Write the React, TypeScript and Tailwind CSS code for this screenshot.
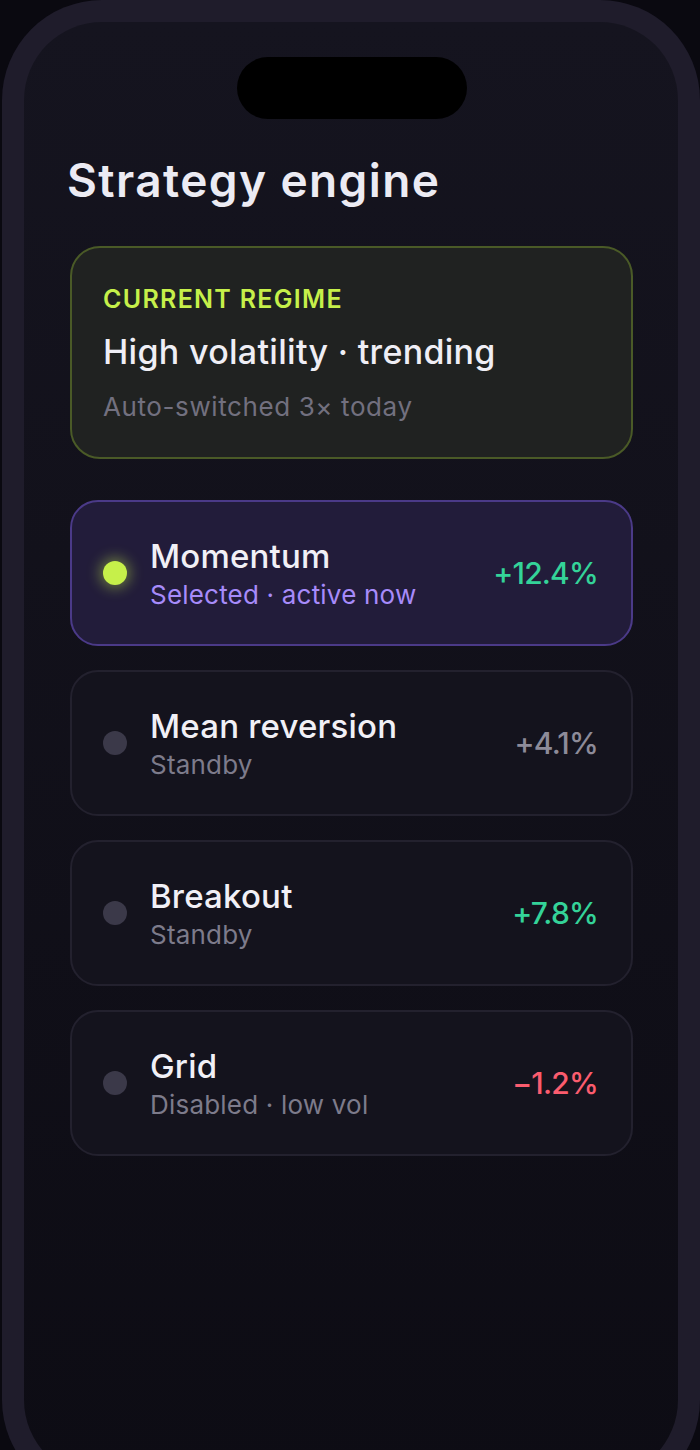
import React from "react";

type Strategy = {
  name: string;
  status: string;
  value: string;
  valueClass: string;
  active?: boolean;
};

const strategies: Strategy[] = [
  { name: "Momentum", status: "Selected · active now", value: "+12.4%", valueClass: "text-[#34d399]", active: true },
  { name: "Mean reversion", status: "Standby", value: "+4.1%", valueClass: "text-[#8d8b99]" },
  { name: "Breakout", status: "Standby", value: "+7.8%", valueClass: "text-[#34d399]" },
  { name: "Grid", status: "Disabled · low vol", value: "−1.2%", valueClass: "text-[#fb5c6e]" },
];

function StrategyRow({ s }: { s: Strategy }) {
  return (
    <div
      className={
        s.active
          ? "flex h-[146px] items-center rounded-[28px] border-2 border-[#4b3a88] bg-[#221c3a] pl-[31px] pr-[33px]"
          : "flex h-[146px] items-center rounded-[28px] border-2 border-[#23212e] bg-[#14131d] pl-[31px] pr-[33px]"
      }
    >
      <div
        className={
          s.active
            ? "h-[24px] w-[24px] shrink-0 rounded-full bg-[#c6f04a] shadow-[0_0_14px_3px_rgba(198,240,74,0.45)]"
            : "h-[24px] w-[24px] shrink-0 rounded-full bg-[#3b3949]"
        }
      />
      <div className="ml-[23px] flex min-w-0 flex-1 flex-col">
        <div className="text-[33px] font-medium leading-[40px] tracking-[0.2px] text-[#f1f0f6]">{s.name}</div>
        <div
          className={
            s.active
              ? "mt-[3px] text-[26px] leading-[32px] tracking-[0.2px] text-[#a78bfa]"
              : "mt-[3px] text-[26px] leading-[32px] tracking-[0.2px] text-[#7d7b8b]"
          }
        >
          {s.status}
        </div>
      </div>
      <div className={"text-[30px] font-medium tracking-[-0.8px] " + s.valueClass}>{s.value}</div>
    </div>
  );
}

export default function App() {
  return (
    <div
      className="relative h-[1450px] w-[700px] overflow-hidden bg-[#0a0910]"
      style={{ fontFamily: "Inter, 'Noto Sans', sans-serif" }}
    >
      {/* device frame */}
      <div className="absolute left-[2px] top-0 h-[1500px] w-[698px] rounded-[100px] bg-[#1f1c2b] p-[22px]">
        <div className="flex h-full w-full flex-col rounded-[78px] bg-gradient-to-b from-[#15141f] to-[#0d0c14] pl-[46px] pr-[45px]">
          {/* dynamic island */}
          <div className="mx-auto mt-[35px] h-[62px] w-[230px] shrink-0 rounded-full bg-black" />

          <h1 className="ml-[-3px] mt-[31px] text-[46px] font-semibold leading-[60px] tracking-[1.4px] text-[#ecebf3]">
            Strategy engine
          </h1>

          {/* regime card */}
          <div className="mt-[36px] flex h-[213px] flex-col rounded-[30px] border-2 border-[#4a5a27] bg-[#202221] px-[31px] pt-[36px]">
            <div className="text-[25px] font-semibold leading-[30px] tracking-[1.3px] text-[#c6f04a]">CURRENT REGIME</div>
            <div className="mt-[18px] text-[34px] font-medium leading-[40px] tracking-[0.3px] text-[#efeef5]">
              High volatility · trending
            </div>
            <div className="mt-[19px] text-[26px] leading-[32px] tracking-[0.6px] text-[#72707f]">Auto-switched 3× today</div>
          </div>

          {/* strategy list */}
          <div className="mt-[41px] flex flex-col gap-[24px]">
            {strategies.map((s) => (
              <StrategyRow key={s.name} s={s} />
            ))}
          </div>
        </div>
      </div>
    </div>
  );
}
